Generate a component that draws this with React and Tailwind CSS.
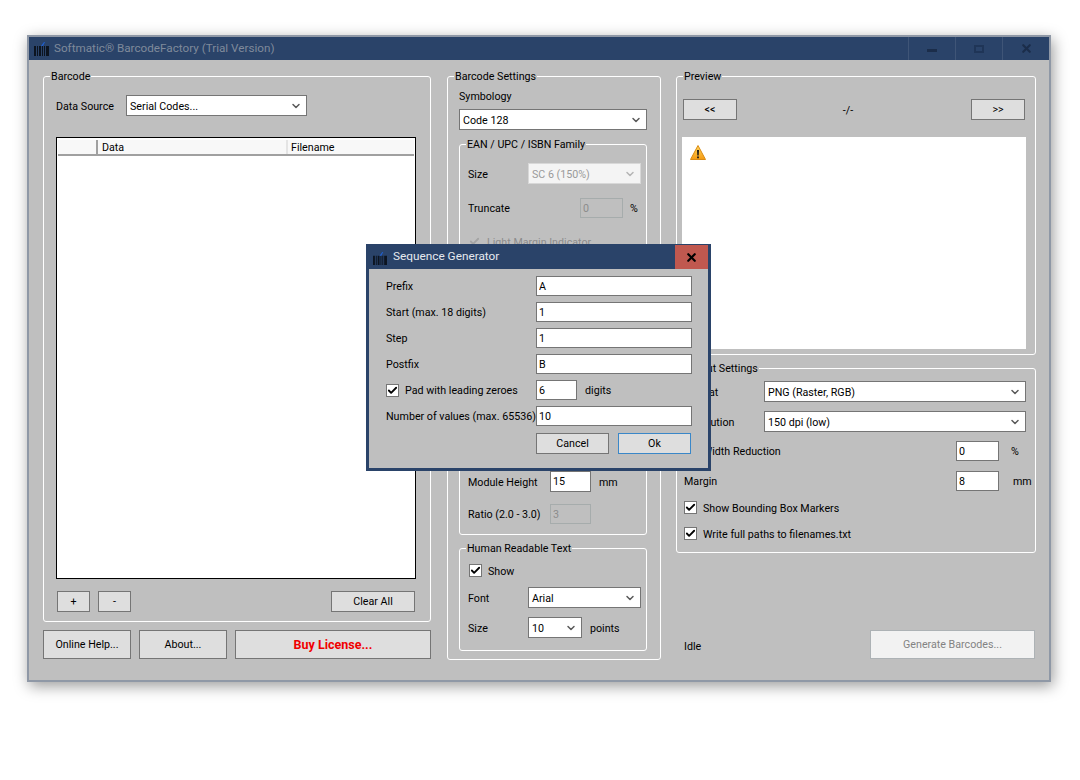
import React from 'react';
import { ChevronDown, Check, X } from 'lucide-react';

const BarcodeIcon = ({ className }) => (
  <svg viewBox="0 0 15 14" className={className}>
    <path d="M0 4h2v10H0zM3 4h1v10H3zM5 4h2v10H5zM8 4h1v10H8zM10 4h1v10h-1zM12 4h3v10h-3z" fill="#0c1420" />
    <path d="M7 4l3-4h1l-2 4z" fill="#1f5fd0" />
  </svg>
);

const WarnIcon = () => (
  <svg viewBox="0 0 16 16" className="ml-[8px] mt-[8px] w-[16px] h-[16px]">
    <defs>
      <linearGradient id="warn" x1="0" y1="0" x2="0" y2="1">
        <stop offset="0" stopColor="#ffd75e" />
        <stop offset="1" stopColor="#f59a12" />
      </linearGradient>
    </defs>
    <path d="M8 .5 15.5 14.5H.5z" fill="url(#warn)" stroke="#d98a14" strokeLinejoin="round" />
    <path d="M7 5h2l-.3 5.5H7.3zM7.1 11.5h1.8v1.8H7.1z" fill="#1a1a1a" />
  </svg>
);

const Label = ({ className = '', children }) => (
  <span className={`block h-[14px] leading-[15px] whitespace-nowrap ${className}`}>{children}</span>
);

const Group = ({ title, className, children }) => (
  <fieldset className={`border border-white rounded-[3px] shrink-0 min-w-0 ${className}`}>
    <legend className="ml-[6px] px-[1px] h-[14px] leading-[16px] text-black">{title}</legend>
    {children}
  </fieldset>
);

const Btn = ({ className = '', children }) => (
  <button className={`flex items-center justify-center pt-[2px] bg-[#dedede] border border-[#757575] text-black shrink-0 ${className}`}>
    {children}
  </button>
);

const Select = ({ value, disabled, className = '' }) => (
  <div className={`h-[21px] flex items-center justify-between pl-[3px] pr-[4px] shrink-0 border ${disabled ? 'bg-[#f4f4f4] border-[#d8d8d8] text-[#9a9a9a]' : 'bg-white border-[#757575] text-black'} ${className}`}>
    <Label>{value}</Label>
    <ChevronDown size={12} strokeWidth={3} className={disabled ? 'text-[#b5b5b5]' : 'text-[#5a5a5a]'} />
  </div>
);

const Field = ({ value, disabled, className = '' }) => (
  <input
    readOnly
    value={value}
    className={`h-[20px] px-[2px] shrink-0 border outline-none ${disabled ? 'bg-transparent border-[#a6acac] text-[#8c8c8c]' : 'bg-white border-[#757575] text-black'} ${className}`}
  />
);

const CheckBox = ({ label, disabled, className = '' }) => (
  <div className={`flex items-center h-[13px] ${className}`}>
    <span className={`w-[13px] h-[13px] flex items-center justify-center shrink-0 ${disabled ? '' : 'bg-white border border-[#757575]'}`}>
      <Check size={11} strokeWidth={4} className={disabled ? 'text-[#a4a4a4]' : 'text-black'} />
    </span>
    <Label className={`ml-[6px] ${disabled ? 'text-[#8c8c8c]' : ''}`}>{label}</Label>
  </div>
);

const DialogRow = ({ label, value }) => (
  <div className="flex items-center h-[20px] mb-[6px]">
    <Label className="w-[150px]">{label}</Label>
    <Field value={value} className="w-[156px]" />
  </div>
);

function SequenceDialog() {
  return (
    <div className="absolute left-[366px] top-[244px] w-[345px] h-[227px] border-[3px] border-t-[1px] border-[#2a4369] bg-[#bfbfbf] text-black">
      <div className="h-[24px] bg-[#2a4369] flex items-center pl-[4px]">
        <BarcodeIcon className="w-[14px] h-[13px] mt-[2px]" />
        <span className="ml-[6px] text-[#e6e9ee] text-[11.8px]">Sequence Generator</span>
        <div className="ml-auto w-[33px] h-[24px] bg-[#c0584f] flex items-center justify-center">
          <X size={13} strokeWidth={4} className="text-black" />
        </div>
      </div>
      <div className="pl-[17px] pt-[7px]">
        <DialogRow label="Prefix" value="A" />
        <DialogRow label="Start (max. 18 digits)" value="1" />
        <DialogRow label="Step" value="1" />
        <DialogRow label="Postfix" value="B" />
        <div className="flex items-center h-[20px] mb-[6px]">
          <CheckBox label="Pad with leading zeroes" className="w-[150px]" />
          <Field value="6" className="w-[41px]" />
          <Label className="ml-[8px]">digits</Label>
        </div>
        <DialogRow label="Number of values (max. 65536)" value="10" />
        <div className="flex mt-[7px] ml-[150px] gap-[9px]">
          <Btn className="w-[73px] h-[21px]">Cancel</Btn>
          <Btn className="w-[73px] h-[21px] !border-[#3a87c8]">Ok</Btn>
        </div>
      </div>
    </div>
  );
}

export default function App() {
  return (
    <div className="relative w-[1080px] h-[780px] bg-white overflow-hidden pt-[35px] pl-[27px] font-['Roboto',sans-serif] text-[10.7px] text-black">
      <div className="w-[1024px] h-[647px] border-2 border-[#8f98a6] bg-[#bfbfbf] flex flex-col shadow-[2px_4px_14px_rgba(0,0,0,0.4)]">
        {/* Title bar */}
        <div className="h-[23px] bg-[#2a4369] flex items-center shrink-0 pl-[5px]">
          <BarcodeIcon className="w-[15px] h-[14px]" />
          <span className="ml-[5px] text-[#7f8a9b] text-[11.7px]">Softmatic® BarcodeFactory (Trial Version)</span>
          <div className="ml-auto flex h-full">
            <div className="w-[47px] flex items-end justify-center pb-[8px] border-l border-[#3f5577]">
              <div className="w-[10px] h-[3px] bg-[#1b2d4a]" />
            </div>
            <div className="w-[47px] flex items-center justify-center border-l border-[#3f5577]">
              <div className="w-[10px] h-[8px] border-2 border-[#1f3557]" />
            </div>
            <div className="w-[47px] flex items-center justify-center border-l border-[#3f5577]">
              <X size={13} strokeWidth={4} className="text-[#1b2d4a]" />
            </div>
          </div>
        </div>

        <div className="flex pt-[9px] pl-[14px]">
          {/* Left column */}
          <div className="w-[388px] mr-[16px] flex flex-col shrink-0">
            <Group title="Barcode" className="h-[553px]">
              <div className="flex items-center mt-[12px] ml-[12px]">
                <Label className="w-[70px]">Data Source</Label>
                <Select value="Serial Codes..." className="w-[181px]" />
              </div>
              <div className="mt-[21px] ml-[12px] w-[360px] h-[442px] border border-black bg-white pt-[2px] px-[1px]">
                <div className="flex h-[16px] leading-[16px] bg-[#f8f8f8] border-b-2 border-[#a0a0a0]">
                  <div className="w-[40px] border-r-2 border-[#a0a0a0]" />
                  <div className="w-[190px] pl-[4px] border-r-2 border-[#e4e4e4]">Data</div>
                  <div className="pl-[3px]">Filename</div>
                </div>
              </div>
              <div className="flex mt-[12px] ml-[13px] w-[358px]">
                <Btn className="w-[33px] h-[21px]">+</Btn>
                <Btn className="w-[33px] h-[21px] ml-[8px]">-</Btn>
                <Btn className="w-[84px] h-[21px] ml-auto">Clear All</Btn>
              </div>
            </Group>
            <div className="flex gap-[8px] mt-[8px]">
              <Btn className="w-[88px] h-[29px]">Online Help...</Btn>
              <Btn className="w-[88px] h-[29px]">About...</Btn>
              <Btn className="w-[196px] h-[29px] font-bold text-[12.5px] !text-[#f00000]">Buy License...</Btn>
            </div>
          </div>

          {/* Middle column */}
          <Group title="Barcode Settings" className="w-[214px] h-[591px] mr-[15px]">
            <div className="ml-[11px] w-[188px]">
              <Label className="mt-[6px]">Symbology</Label>
              <Select value="Code 128" className="mt-[6px] w-[188px]" />
              <Group title="EAN / UPC / ISBN Family" className="w-[188px] h-[398px] mt-[7px]">
                <div className="pl-[8px]">
                  <div className="flex items-center mt-[12px]">
                    <Label className="w-[60px]">Size</Label>
                    <Select value="SC 6 (150%)" disabled className="w-[113px]" />
                  </div>
                  <div className="flex items-center mt-[14px]">
                    <Label className="w-[112px]">Truncate</Label>
                    <Field value="0" disabled className="w-[43px]" />
                    <Label className="ml-[7px]">%</Label>
                  </div>
                  <CheckBox label="Light Margin Indicator" disabled className="mt-[17px]" />
                  <div className="flex items-center mt-[223px]">
                    <Label className="w-[82px]">Module Height</Label>
                    <Field value="15" className="w-[41px] !h-[21px]" />
                    <Label className="ml-[8px]">mm</Label>
                  </div>
                  <div className="flex items-center mt-[12px]">
                    <Label className="w-[82px]">Ratio (2.0 - 3.0)</Label>
                    <Field value="3" disabled className="w-[41px]" />
                  </div>
                </div>
              </Group>
              <Group title="Human Readable Text" className="w-[188px] h-[110px] mt-[6px]">
                <div className="pl-[8px]">
                  <CheckBox label="Show" className="mt-[9px] ml-[1px]" />
                  <div className="flex items-center mt-[10px]">
                    <Label className="w-[60px]">Font</Label>
                    <Select value="Arial" className="w-[113px]" />
                  </div>
                  <div className="flex items-center mt-[9px]">
                    <Label className="w-[60px]">Size</Label>
                    <Select value="10" className="w-[54px]" />
                    <Label className="ml-[8px]">points</Label>
                  </div>
                </div>
              </Group>
            </div>
          </Group>

          {/* Right column */}
          <div className="w-[360px] h-[590px] flex flex-col shrink-0">
            <Group title="Preview" className="w-[360px] h-[286px]">
              <div className="flex items-center justify-between mt-[16px] mx-[6px] w-[342px]">
                <Btn className="w-[54px] h-[21px]">&lt;&lt;</Btn>
                <Label className="mr-[12px]">-/-</Label>
                <Btn className="w-[54px] h-[21px]">&gt;&gt;</Btn>
              </div>
              <div className="mt-[17px] ml-[5px] w-[344px] h-[212px] bg-white overflow-hidden">
                <WarnIcon />
              </div>
            </Group>
            <Group title="Output Settings" className="w-[360px] h-[192px] mt-[6px]">
              <div className="pl-[7px]">
                <div className="flex items-center mt-[6px]">
                  <Label className="w-[80px]">Format</Label>
                  <Select value="PNG (Raster, RGB)" className="w-[262px]" />
                </div>
                <div className="flex items-center mt-[9px]">
                  <Label className="w-[80px]">Resolution</Label>
                  <Select value="150 dpi (low)" className="w-[262px]" />
                </div>
                <div className="flex items-center mt-[9px]">
                  <Label className="w-[272px]">Bar Width Reduction</Label>
                  <Field value="0" className="w-[43px]" />
                  <Label className="ml-[12px]">%</Label>
                </div>
                <div className="flex items-center mt-[10px]">
                  <Label className="w-[272px]">Margin</Label>
                  <Field value="8" className="w-[43px]" />
                  <Label className="ml-[14px]">mm</Label>
                </div>
                <CheckBox label="Show Bounding Box Markers" className="mt-[10px]" />
                <CheckBox label="Write full paths to filenames.txt" className="mt-[13px]" />
              </div>
            </Group>
            <div className="flex items-center justify-between mt-auto pl-[8px] pr-[1px]">
              <Label className="pt-[1px]">Idle</Label>
              <button className="w-[165px] h-[29px] pt-[2px] bg-[#f2f2f2] border border-[#adb2b5] text-[#838383]">Generate Barcodes...</button>
            </div>
          </div>
        </div>
      </div>

      <SequenceDialog />
    </div>
  );
}
